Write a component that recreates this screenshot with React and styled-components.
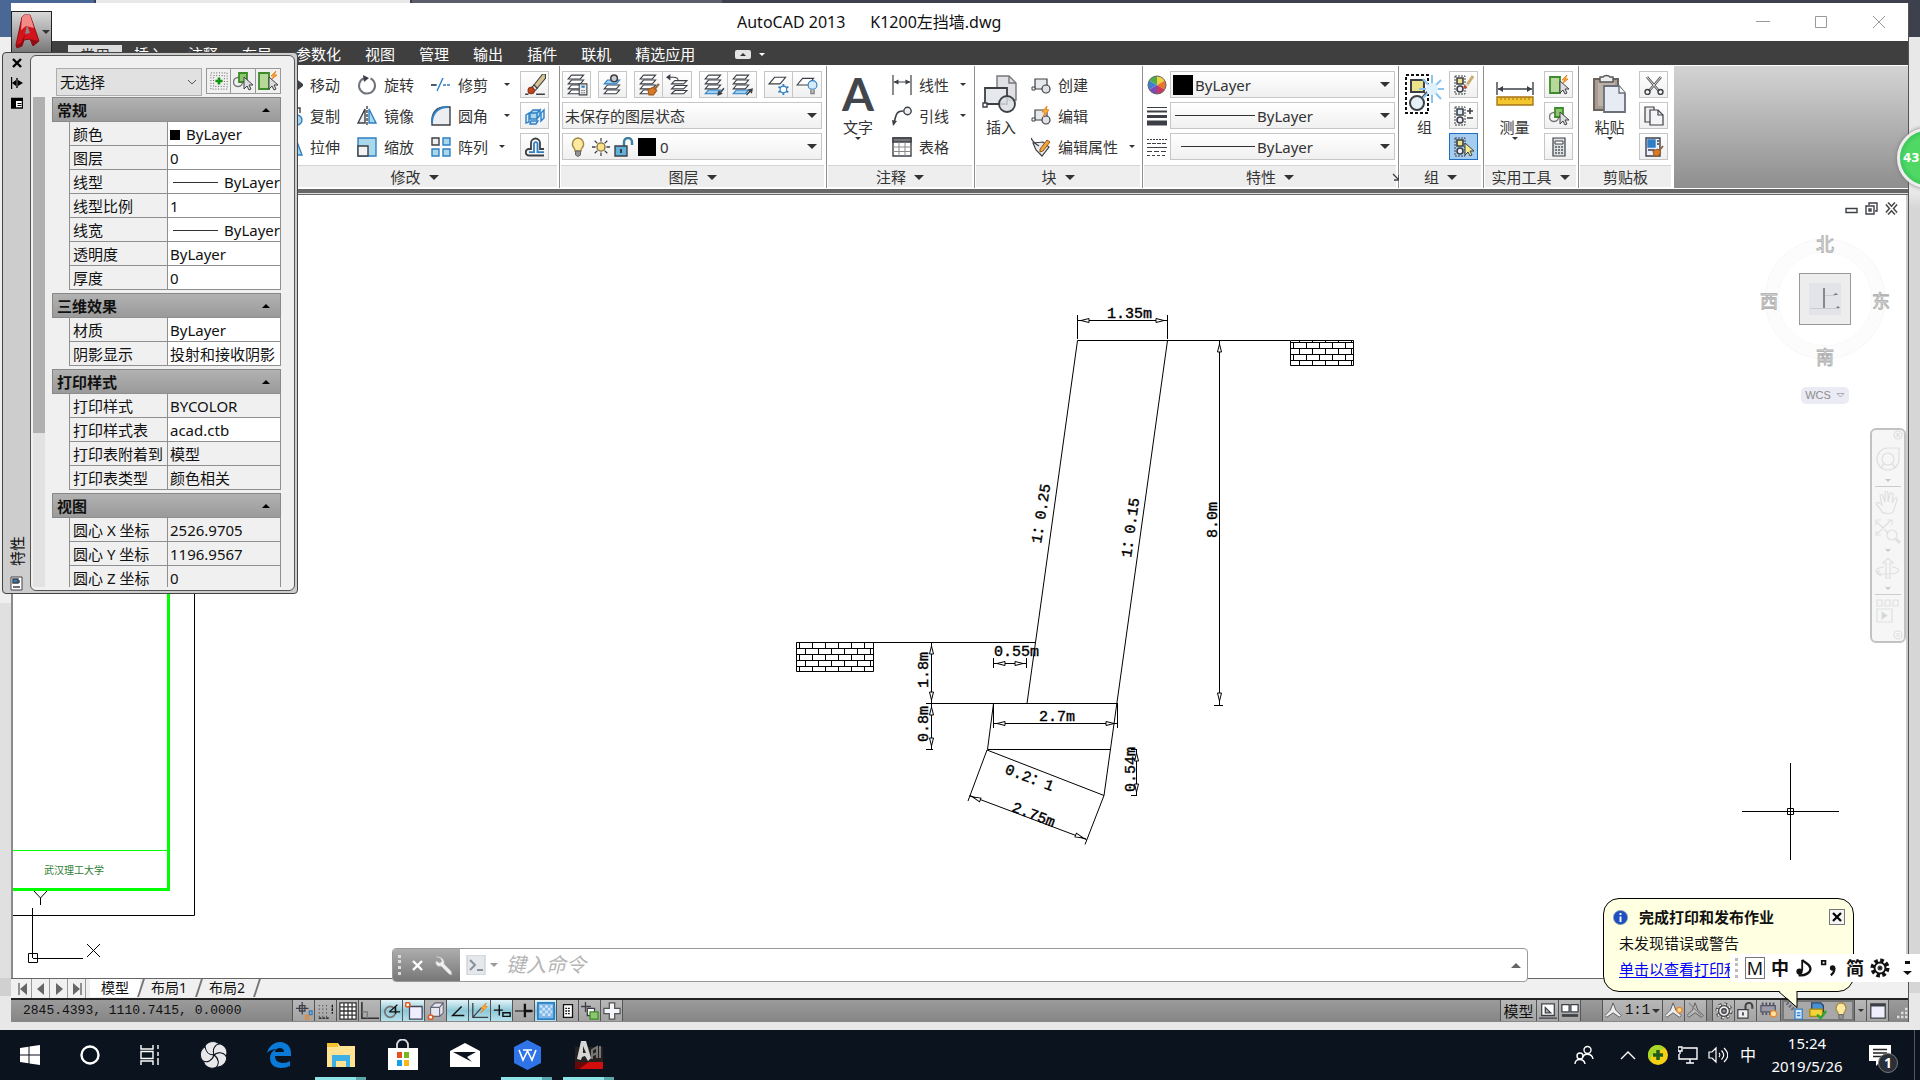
import React from 'react';
import styled, { createGlobalStyle, css } from 'styled-components';

const ink = '#3c4046';
const blue = '#2f7fc4';
const paleBlue = '#a9d8ea';
const orange = '#e8862a';
const uiFont = '"Noto Sans", "Noto Sans CJK SC", sans-serif';
const monoFont = '"Liberation Mono", "Noto Sans CJK SC", monospace';

const GlobalStyle = createGlobalStyle`
  * {
    box-sizing: border-box;
  }
  body {
    margin: 0;
    font-family: ${uiFont};
    font-size: 15px;
    line-height: 20px;
    color: #111;
  }
  button, select, input {
    font: inherit;
    color: inherit;
    margin: 0;
    padding: 0;
    border: 0;
    border-radius: 0;
    background: none;
  }
  svg {
    display: block;
    flex: none;
  }
`;

// Icons

const Svg = ({ s = 20, w = s, h = s, box = '0 0 20 20', line = 1.4, children }) => (
  <svg width={w} height={h} viewBox={box} fill="none" stroke={ink} strokeWidth={line} aria-hidden="true">
    {children}
  </svg>
);

const Caret = ({ s = 8, up, color = '#333' }) => (
  <svg width={s} height={s / 2} viewBox="0 0 8 4" aria-hidden="true">
    <path d={up ? 'M0 4h8L4 0z' : 'M0 0h8L4 4z'} fill={color} />
  </svg>
);

const MoveIcon = () => (
  <Svg><path d="M10 1v18M1 10h18M7 4l3-3 3 3M7 16l3 3 3-3M4 7l-3 3 3 3" /><path d="M15 6l5 4-5 4z" fill={ink} /></Svg>
);
const CopyObjIcon = () => (
  <Svg><circle cx="6" cy="6" r="4" /><circle cx="14" cy="14" r="5" fill={paleBlue} stroke={blue} /><path d="M12 2h5v5" /></Svg>
);
const StretchIcon = () => (
  <Svg><path d="M2 18V8h8M13 2l6 16H8z" fill={paleBlue} stroke={blue} /></Svg>
);
const RotateIcon = () => (
  <Svg><path d="M7 3.200a8 8 0 1 0 6.500 .2" stroke="#70757c" strokeWidth="2" /><path d="M6 0l6 3-5 4z" fill={ink} stroke="none" /></Svg>
);
const MirrorIcon = () => (
  <Svg><path d="M8 3v14H1z" fill="#eee" /><path d="M12 3v14h7z" fill={paleBlue} stroke={blue} /><path d="M10 0v20" strokeDasharray="3 1" /></Svg>
);
const ScaleIcon = () => (
  <Svg><path d="M1 1h18v18H1z" fill={paleBlue} stroke={blue} /><path d="M1 9h10v10H1z" fill="#f2f2f4" /></Svg>
);
const TrimIcon = () => (
  <Svg><path d="M0 10h6M6 16L12 3" stroke={blue} /><path d="M0 10h5" stroke={ink} /><path d="M12 10h8" stroke={blue} strokeDasharray="3 1" /></Svg>
);
const FilletIcon = () => (
  <Svg><path d="M1 19V14C1 6 6 1 14 1h5v18z" fill="#eceef2" /><path d="M1 17C1 7 7 1 17 1" stroke={blue} strokeWidth="2" /></Svg>
);
const ArrayIcon = () => (
  <Svg>
    <path d="M1 1h7v7H1z" fill="#eee" />
    <path d="M12 1h7v7h-7zM1 12h7v7H1zM12 12h7v7h-7z" fill={paleBlue} stroke={blue} />
  </Svg>
);
const EraseIcon = () => (
  <Svg s={22} line={1}>
    <path d="M1 18.500h3M11 18.500h8" strokeWidth="1.400" />
    <path d="M9 10L17 0h2.500v4L12 13z" fill="#d8c292" />
    <path d="M6 13l3-3 3 3-3 3z" fill="#e4e4e4" />
    <ellipse cx="6.500" cy="15" rx="2.800" ry="3" fill="#c0451c" stroke="#8a2f10" />
  </Svg>
);
const ExplodeIcon = () => (
  <Svg>
    <path d="M5 7l3-3h7l-3 3zM5 7h7v6H5zM12 7l3-3v5l-3 4z" fill={paleBlue} stroke={blue} />
    <path d="M1 9l3-2v9l-3 1zM16 7l3-3v8l-3 3zM6 15h7l-2 3H5z" fill="#d8eefa" stroke={blue} />
  </Svg>
);
const OffsetIcon = () => (
  <Svg>
    <path d="M19 18.500H4a3.200 3.200 0 0 1 0-6.500h2V6a4.500 4.500 0 0 1 9 0v6h4" strokeWidth="1.800" />
    <path d="M4 15.200h5V6.500a1.800 1.800 0 0 1 3.500 0v8.700H19" stroke={blue} strokeWidth="1.800" />
  </Svg>
);

const Layers = ({ accent }) => (
  <>
    <path d="M5 14.500h11l-3 3.500H2z" fill={accent === 'low' ? '#9fd0f2' : '#fff'} stroke={accent === 'low' ? blue : ink} />
    <path d="M5 10h11l-3 3.500H2z" fill="#fff" />
    <path d="M5 5.500h11l-3 3.500H2z" fill={accent === 'top' ? '#9fd0f2' : '#fff'} stroke={accent === 'top' ? blue : ink} />
    {accent !== 'top' && <path d="M5 1h11l-3 3.500H2z" fill="#fff" />}
  </>
);
const Brush = () => (
  <>
    <path d="M19 9l-4 5" stroke="#8a6a42" strokeWidth="2" />
    <path d="M9 14l5-2 3 3-3 4h-4z" fill="#d47a26" stroke="#a3561a" strokeWidth="1" />
  </>
);
const LayerPropsIcon = () => (
  <Svg s={22} line={1}><Layers /><path d="M12 9h7v10h-7z" fill="#eee" /><path d="M14 11.500h3" stroke={blue} strokeWidth="2" /><path d="M14 15h3M14 17h3" strokeDasharray="1 1" /></Svg>
);
const LayerCurrentIcon = () => (
  <Svg s={22} line={1}><Layers accent="top" /><circle cx="11" cy="4" r="3" fill="#ccc" strokeWidth="1.400" /></Svg>
);
const LayerMatchIcon = () => <Svg s={22} line={1}><Layers /><Brush /></Svg>;
const LayerPrevIcon = () => (
  <Svg s={22} line={1}><path d="M8 6h11l-3 3H5zM8 10.500h11l-3 3H5zM8 15h11l-3 3H5z" fill="#fff" /><path d="M2 3h5c3 0 4 1 4 3" /><path d="M0 3l4-3v6z" fill={ink} stroke="none" /></Svg>
);
const LayerIsoIcon = () => (
  <Svg s={22} line={1}><Layers accent="low" /><path d="M19 13l-4 5" strokeWidth="1.400" /><path d="M13 20l1-5 4 3z" fill={ink} stroke="none" /></Svg>
);
const LayerUnisoIcon = () => (
  <Svg s={22} line={1}><Layers accent="low" /><path d="M14 19l4-4" strokeWidth="1.400" /><path d="M20 13l-1 5-4-4z" fill={ink} stroke="none" /></Svg>
);
const LayerFreezeIcon = () => (
  <Svg s={22} line={1}>
    <path d="M6 3h10l-5 6H1z" fill="#fff" />
    <path d="M14 9v10M9.500 11.500l9 5M18.500 11.500l-9 5" stroke={blue} strokeWidth="1.600" />
    <circle cx="14" cy="14" r="3" fill="#fff" stroke={blue} />
  </Svg>
);
const LayerOffIcon = () => (
  <Svg s={22} line={1}><path d="M6 4h10l-5 6H1z" fill="#fff" /><circle cx="15" cy="10" r="4" fill="#d5ebfa" stroke={blue} /><path d="M13.500 14v4h3v-4" fill="#bbb" stroke="#777" /></Svg>
);

const BulbIcon = ({ s = 20 }) => (
  <Svg s={s}>
    <path d="M10 1a6 6 0 0 1 4 10c-1 1-1 2-1 3H7c0-1 0-2-1-3A6 6 0 0 1 10 1z" fill="#ffe9a0" stroke="#a58b4a" />
    <path d="M7.500 14h5v4l-2.500 1.500L7.500 18z" fill="#8f9499" stroke="#666" strokeWidth="1" />
  </Svg>
);
const SunIcon = () => (
  <Svg s={18}>
    <circle cx="10" cy="10" r="4.500" fill="#ffe08a" stroke="#7a6a3a" />
    <path d="M10 0v4M10 16v4M0 10h4M16 10h4M3 3l3 3M14 14l3 3M3 17l3-3M14 6l3-3" />
  </Svg>
);
const UnlockIcon = ({ s = 20, fill = '#5fb3d8', metal = '#3f7f9e' }) => (
  <Svg s={s}>
    <path d="M10 9V5a4 4 0 0 1 8 0v3" stroke={metal} strokeWidth="2.400" />
    <path d="M1 9h12v10H1z" fill={fill} />
    <path d="M7 12v4" strokeWidth="2" />
  </Svg>
);

const LinearDimIcon = () => (
  <Svg line={1.2}><path d="M1 0v20M19 0v20M2 7h16" /><path d="M1.500 7l5-2.500v5zM18.500 7l-5-2.500v5z" fill={ink} stroke="none" /></Svg>
);
const LeaderIcon = () => (
  <Svg><path d="M2 18C4 6 6 5 11 5" strokeWidth="1.600" /><circle cx="15.500" cy="5" r="3.700" fill="#eee" /><path d="M1 20l-1-6 5 1z" fill={ink} stroke="none" /></Svg>
);
const TableIcon = () => (
  <Svg>
    <path d="M1 1h18v18H1z" fill="#fff" /><path d="M1 1h18v4H1z" fill="#777" />
    <path d="M1 10h18M1 14.500h18M7 5v14M13 5v14" stroke="#888" strokeWidth="1" />
  </Svg>
);
const InsertIcon = () => (
  <Svg s={38} box="0 0 38 38">
    <path d="M15 1h12l7 7v17H15z" fill="#dfe1e5" stroke="#777" />
    <path d="M27 1v7h7" stroke="#777" />
    <path d="M3 13h22v16H3z" fill="#e6e8ec" strokeWidth="1.800" />
    <circle cx="25" cy="29" r="8" fill="#dadde2" fillOpacity=".85" strokeWidth="1.800" />
    <path d="M1 28h4v4H1z" fill="#fff" />
  </Svg>
);
const BlockBase = () => (
  <>
    <path d="M4 4h12v10H4z" fill="#e6e8ec" />
    <circle cx="15" cy="14" r="4" fill="#e0e2e6" />
    <path d="M1 12h3v3H1z" fill="#fff" strokeWidth="1" />
  </>
);
const CreateBlockIcon = () => <Svg line={1.2}><BlockBase /></Svg>;
const EditBlockIcon = () => (
  <Svg line={1.2}><BlockBase /><path d="M16 0l-5 6h3l-2 5 6-7h-3z" fill="#ffb52e" stroke={orange} strokeWidth="1" /></Svg>
);
const EditAttrIcon = () => (
  <Svg line={1.2}>
    <path d="M2 6l10-1 6 5-7 9-6-6z" fill="#e8eaee" /><path d="M0 1c2 5 5 6 8 8" />
    <path d="M9 12l7-9 3 2-7 9-3 1z" fill="#f3a43c" stroke="#8c5a1a" strokeWidth="1" />
  </Svg>
);
const WheelIcon = () => (
  <Svg>
    <g stroke="none">
      <path d="M10 10V1a9 9 0 0 1 7.800 4.500z" fill="#f2d23c" />
      <path d="M10 10l7.800-4.500a9 9 0 0 1 0 9z" fill="#e8762c" />
      <path d="M10 10l7.800 4.500A9 9 0 0 1 10 19z" fill="#c83a58" />
      <path d="M10 10v9a9 9 0 0 1-7.800-4.500z" fill="#7a4bb8" />
      <path d="M10 10l-7.800 4.500a9 9 0 0 1 0-9z" fill="#3f7fd0" />
      <path d="M10 10L2.200 5.500A9 9 0 0 1 10 1z" fill="#4fae4a" />
    </g>
    <circle cx="10" cy="10" r="9" stroke="#666" strokeWidth="1" />
  </Svg>
);
const WeightIcon = () => (
  <Svg><path d="M0 1.500h20" strokeWidth="1" /><path d="M0 5.500h20" strokeWidth="2" /><path d="M0 10.500h20" strokeWidth="3" /><path d="M0 17h20" strokeWidth="5" /></Svg>
);
const LinetypeIcon = () => (
  <Svg line={1}>
    <path d="M0 2.500h20" strokeDasharray="2 1" /><path d="M0 6.500h20" strokeDasharray="4 1" /><path d="M0 10.500h20" />
    <path d="M0 14.500h20" strokeDasharray="5 2" /><path d="M0 18.500h20" strokeDasharray="3 2" />
  </Svg>
);
const GroupIcon = () => (
  <Svg s={40} box="0 0 40 40">
    <path d="M1 1h22v38H1z" stroke="#111" strokeWidth="2" strokeDasharray="3 2" />
    <path d="M6 6h13v12H6z" fill="#ece28a" strokeWidth="2" />
    <path d="M17 24l6-7" strokeWidth="2" /><circle cx="12" cy="29" r="7" fill="#e6f1f5" strokeWidth="2" />
    <path d="M27 1v28M14 15h25M18 5l18 20M36 6L18 24" stroke="#8cc4f0" strokeWidth="2" />
    <circle cx="27" cy="15" r="6" fill="#dff1ff" stroke="none" />
  </Svg>
);
const GroupMini = ({ tone = '#ece28a' }) => (
  <>
    <path d="M1 1h10v18H1z" strokeDasharray="2 1" strokeWidth="1" />
    <path d="M3 3h6v6H3z" fill={tone} strokeWidth="1.600" /><circle cx="6" cy="14" r="3" fill="#eef" strokeWidth="1.600" />
  </>
);
const Pointer = ({ fill = '#ddd' }) => <path d="M11 6v12l3-3 2 4 2-1-2-4h4z" fill={fill} strokeWidth="1" />;
const UngroupIcon = () => (
  <Svg><GroupMini /><path d="M19 1l-6 9" stroke="#c9ad6c" strokeWidth="3" /><path d="M13 9l-1 2" stroke="#ddd" strokeWidth="3" /><path d="M12 11l-1.500 2" stroke="#c0451c" strokeWidth="3.500" /></Svg>
);
const GroupEditIcon = () => (
  <Svg><GroupMini tone="#dbe9f7" /><path d="M13 5h6M16 2v6M13 12h6" strokeWidth="1.600" /></Svg>
);
const GroupSelectIcon = () => <Svg><GroupMini /><Pointer fill="#f4e98c" /></Svg>;
const MeasureIcon = () => (
  <Svg w={38} h={24} box="0 0 38 24">
    <path d="M1 0v13M37 0v13M2 7h34" strokeWidth="1.400" /><path d="M2 7l5-3v6zM36 7l-5-3v6z" fill={ink} stroke="none" />
    <path d="M1 15h36v8H1z" fill="#f3c52f" stroke="#a8761a" />
    <path d="M5 15v3M9 15v3M13 15v3M17 15v3M21 15v3M25 15v3M29 15v3M33 15v3" stroke="#a8761a" strokeWidth="1" />
  </Svg>
);
const QuickSelectIcon = () => (
  <Svg><path d="M1 2h10v16H1z" fill="#b6d99a" stroke="#3f8a2c" strokeWidth="1.800" /><path d="M18 0l-5 5h3l-3 4 6-5h-3z" fill="#ffb52e" stroke={orange} strokeWidth="1" /><Pointer /></Svg>
);
const SelectObjIcon = () => (
  <Svg><circle cx="5" cy="11" r="4.500" stroke="#777" /><path d="M6 2h8v9H6z" fill="#8cc76d" stroke="#3f8a2c" strokeWidth="1.800" /><Pointer /></Svg>
);
const CalcIcon = () => (
  <Svg line={1.2}>
    <path d="M4 1h12v18H4z" fill="#dde0e4" /><path d="M6 4h8v3H6z" fill="#fff" strokeWidth="1" />
    <path d="M6 10h8M6 13h8M6 16h8" stroke="#777" strokeDasharray="2 1" strokeWidth="2" />
  </Svg>
);
const PasteIcon = () => (
  <Svg w={34} h={40} box="0 0 34 40">
    <path d="M1 5h24v31H1z" fill="#a89c92" stroke="#6b625b" strokeWidth="2" />
    <path d="M5 8h17v24H5z" fill="#bcb2a9" stroke="none" />
    <path d="M7 3h3a4 3 0 0 1 7 0h3v5H7z" fill="#eee" stroke="#555" />
    <path d="M11 12h15l6 7v19H11z" fill="#e6ebf4" stroke="#6a7078" strokeWidth="1.800" /><path d="M26 12v7h6" fill="#fff" stroke="#6a7078" />
  </Svg>
);
const CutIcon = () => (
  <Svg><path d="M3 2l12 14M17 2L5 16" stroke="#555" strokeWidth="2.600" /><path d="M3 2l12 14M17 2L5 16" stroke="#ddd" strokeWidth="1" /><circle cx="3.500" cy="17" r="2.500" /><circle cx="16.500" cy="17" r="2.500" /></Svg>
);
const CopyIcon = () => (
  <Svg line={1.2}><path d="M1 1h9v15H1z" fill="#eee" /><path d="M6 4h8l5 5v10H6z" fill="#f4f4f6" /><path d="M14 4v5h5" /></Svg>
);
const MatchIcon = () => (
  <Svg><path d="M2 1h14v18H2z" fill="#eef" /><path d="M4 3h7v7H4z" fill={blue} stroke={blue} /><path d="M13 4h2M13 7h2M4 13h7" /><Brush /></Svg>
);

// Layout

const Desktop = styled.div`
  position: relative;
  display: flex;
  flex-direction: column;
  min-height: 100vh;
  overflow: hidden;
  background: #e8e8e8;
`;

const BackTop = styled.div`
  display: flex;
  height: 3px;
  background: #3d414d;
  & > i:nth-child(1) { width: 94px; background: #4a6896; }
  & > i:nth-child(2) { width: 314px; margin-left: 2px; background: #e8e8e8; }
  & > i:nth-child(3) { width: 310px; margin-left: 2px; background: #5a5e69; }
`;

const Middle = styled.div`
  flex: 1;
  display: flex;
`;

const Edge = styled.div`
  width: 11px;
  background: ${props => (props.$right
    ? 'linear-gradient(#3d414d 34px, #e8e8e8 34px 190px, #d6d6d6 205px 990px, #e8e8e8 990px)'
    : 'linear-gradient(#4a6896 34px, #efefef 34px 600px, #e0e0e0 600px 975px, #d0d0d0 975px 993px, #e8e8e8 993px)')};
`;

const Window = styled.main`
  flex: 1;
  min-width: 0;
  display: flex;
  flex-direction: column;
  border-right: 1px solid #555;
`;

const TitleBar = styled.header`
  display: flex;
  align-items: center;
  height: 38px;
  padding: 0 22px 0 726px;
  background: #fff;
  white-space: pre;
  h1 {
    flex: 1;
    margin: 0;
    font-size: 16px;
    font-weight: 400;
  }
`;

const CaptionButton = styled.button`
  width: 14px;
  height: 14px;
  margin-left: 44px;
`;

const MenuBar = styled.nav`
  display: flex;
  align-items: center;
  gap: 24px;
  height: 25px;
  padding: 2px 0 0 69px;
  background: #3f3f3f;
  border-bottom: 1px solid #fff;
  color: #fff;
`;

const MenuTab = styled.button`
  height: 22px;
  white-space: nowrap;
  ${props => props.$active && css`
    height: 20px;
    margin: 2px -12px 0;
    padding: 0 12px;
    background: #dcdcdc;
    color: #333;
  `}
`;

const MinimizeTab = styled.button`
  display: flex;
  align-items: center;
  gap: 8px;
  margin-left: 16px;
  span {
    display: flex;
    align-items: center;
    justify-content: center;
    width: 16px;
    height: 9px;
    border-radius: 2px;
    background: #e4e4e4;
  }
`;

const Ribbon = styled.section`
  display: flex;
  height: 122px;
  background: linear-gradient(#d4d4d4, #8e8e8e);
  color: #333;
`;

const Panel = styled.div`
  display: flex;
  flex-direction: column;
  width: ${props => props.$w}px;
  border-right: 1px solid #8f8f8f;
  background: #fff;
  &:last-child { border-right-color: #fff; }
`;

const PanelBody = styled.div`
  flex: 1;
  display: flex;
  gap: ${props => props.$gap || 0}px;
  padding: 5px ${props => props.$pr || 5}px 0 ${props => props.$pl || 2}px;
`;

const PanelFoot = styled.button`
  display: flex;
  align-items: center;
  justify-content: center;
  gap: 8px;
  height: 22px;
  margin: 0 2px 1px 1px;
  padding-top: 1px;
  background: #eee;
  border-top: 1px solid #d4d4d4;
`;

const FootLauncher = styled.span`
  width: 0;
  margin-left: -8px;
  svg { margin-left: 98px; }
`;

const Column = styled.div`
  display: flex;
  flex-direction: column;
  gap: 4px;
  ${props => props.$grow && 'flex: 1; min-width: 0;'}
`;

const ColumnPair = styled.div`
  display: flex;
  gap: 10px;
`;

const Tool = styled.button`
  display: flex;
  align-items: center;
  gap: 7px;
  height: 27px;
  white-space: nowrap;
  & > svg:last-child:not(:first-child) { margin-left: ${props => (props.$wide ? 9 : 4)}px; }
`;

const IconButton = styled.button`
  display: flex;
  align-items: center;
  justify-content: center;
  width: 29px;
  height: 27px;
  border: 1px solid #c6c6c6;
  background: linear-gradient(#fff, #f0f0f0);
  ${props => props.$on && css`
    border-color: #1f6fc0;
    background: #a6cdf0;
  `}
`;

const ButtonRow = styled.div`
  display: flex;
  justify-content: space-between;
`;

const ButtonPair = styled.div`
  display: flex;
  button + button { border-left: 0; }
`;

const BigTool = styled.button`
  display: flex;
  flex-direction: column;
  align-items: center;
  width: 42px;
  height: 80px;
  line-height: 20px;
`;

const BigArt = styled.span`
  display: flex;
  align-items: center;
  justify-content: center;
  height: 46px;
`;

const BigLetter = styled.span`
  font: 700 46px/40px Lato, sans-serif;
  color: #42464c;
`;

const Combo = styled.label`
  display: flex;
  align-items: center;
  gap: 4px;
  height: 27px;
  padding: 0 4px 0 ${props => (props.$pl === undefined ? 2 : props.$pl)}px;
  border: 1px solid #c6c6c6;
  background: linear-gradient(#fff, #f0f0f0);
  select {
    flex: 1;
    min-width: 0;
    appearance: none;
    outline: 0;
  }
`;

const Swatch = styled.i`
  width: ${props => props.$s}px;
  height: ${props => props.$s}px;
  background: #000;
`;

const LineSample = styled.i`
  width: ${props => props.$w}px;
  height: 0;
  border-top: 1px solid #333;
`;

const PropRow = styled.div`
  display: flex;
  align-items: center;
  gap: 3px;
  ${Combo} {
    flex: 1;
    min-width: 0;
    gap: 2px;
  }
`;

const Divider = styled.div`
  height: 7px;
  background: linear-gradient(#fff 1px, #666 1px 5px, #ddd 5px 6px, #666 6px);
`;

const Canvas = styled.section`
  position: relative;
  flex: 1;
  background: #fff;
  border-left: 2px solid #8a8a8a;
  border-right: 2px solid #ccc;
`;

const Drawing = styled.svg`
  position: absolute;
  inset: 0;
  width: 100%;
  height: 100%;
  text {
    font: 15px ${monoFont};
    fill: #000;
    stroke: #000;
    stroke-width: .4;
  }
`;

const DocButtons = styled.div`
  position: absolute;
  top: 7px;
  right: 8px;
  display: flex;
  gap: 7px;
`;

const ViewCube = styled.svg`
  position: absolute;
  top: 34px;
  right: 11px;
  text {
    font: 400 18px "Noto Sans CJK SC", sans-serif;
    fill: #f2f2f2;
    stroke: #aaa;
    stroke-width: .8;
    text-anchor: middle;
  }
`;

const WcsButton = styled.button`
  position: absolute;
  top: 192px;
  right: 57px;
  display: flex;
  align-items: center;
  justify-content: center;
  gap: 5px;
  width: 48px;
  height: 17px;
  border-radius: 5px;
  background: #ebebf5;
  color: #8c8c8c;
  font: 11px/17px "Liberation Sans", sans-serif;
`;

const NavBar = styled.aside`
  position: absolute;
  top: 233px;
  right: 0;
  width: 36px;
  height: 215px;
  border: 2px solid #c2c2c2;
  border-radius: 6px;
  background: #f6f6f6;
`;

const CommandLine = styled.div`
  position: absolute;
  z-index: 1;
  left: 379px;
  right: 378px;
  bottom: -4px;
  display: flex;
  height: 34px;
  border: 1px solid #999;
  border-radius: 4px;
  background: #fff;
  overflow: hidden;
  input {
    flex: 1;
    min-width: 0;
    padding: 0 0 2px 2px;
    outline: 0;
    font-size: 20px;
    font-style: italic;
    &::placeholder { color: #b4b4b4; opacity: 1; }
  }
`;

const CommandGrip = styled.div`
  display: flex;
  align-items: center;
  gap: 11px;
  width: 67px;
  padding-left: 5px;
  background: linear-gradient(#adadad, #777);
`;

const CommandButton = styled.button`
  display: flex;
  align-items: center;
  gap: 4px;
  padding: 0 6px;
`;

const LayoutTabs = styled.div`
  display: flex;
  height: 20px;
  padding-left: 3px;
  border-top: 1px solid #666;
  background: #f0f0f0;
  font-size: 14px;
`;

const TabArrow = styled.button`
  display: flex;
  align-items: center;
  justify-content: center;
  width: 18px;
  border-right: 1px solid #999;
`;

const LayoutTab = styled.button`
  position: relative;
  height: 18px;
  padding: 0 11px;
  line-height: 18px;
  &::after {
    content: '';
    position: absolute;
    top: 0;
    right: -2px;
    width: 2px;
    height: 18px;
    background: #777;
    transform: skewX(-18deg);
  }
  ${props => props.$active && css`
    margin-left: 4px;
    background: #fff;
  `}
`;

const StatusBar = styled.footer`
  display: flex;
  height: 24px;
  padding-left: 12px;
  border-top: 2px solid #222;
  border-bottom: 1px solid #888;
  background: linear-gradient(#9b9b9b, #868686);
`;

const Coords = styled.output`
  width: 269px;
  font: 13px/22px ${monoFont};
`;

const StatusButton = styled.button`
  display: flex;
  align-items: center;
  justify-content: center;
  gap: 2px;
  width: ${props => props.$w || 22}px;
  border-left: 1px solid #555;
  background: ${props => (props.$on ? 'linear-gradient(#e2f4f8, #8fc8d8 50%, #b5e2ec)' : 'linear-gradient(#b8b8b8, #a3a3a3)')};
  font: ${props => (props.$mono ? `14px/21px ${monoFont}` : 'inherit')};
  white-space: nowrap;
`;

const StatusGap = styled.div`
  width: ${props => props.$w}px;
  border-left: 1px solid #555;
  ${props => props.$grow && 'flex: 1;'}
`;

const TrayGroup = styled.div`
  display: flex;
  align-items: center;
  justify-content: space-around;
  width: 72px;
  border: 2px solid #777;
  background: #a8a8a8;
`;

const BackBottom = styled.div`
  height: 8px;
  background: #e8e8e8;
`;

// Properties palette

const Palette = styled.aside`
  position: absolute;
  z-index: 2;
  top: 52px;
  left: 2px;
  display: flex;
  width: 296px;
  height: 542px;
  padding: 2px 2px 2px 0;
  border: 1px solid #444;
  border-radius: 4px;
  background: #cdcdcd;
`;

const PaletteRail = styled.div`
  display: flex;
  flex-direction: column;
  align-items: center;
  gap: 8px;
  width: 27px;
  padding-top: 2px;
  button {
    display: flex;
    width: 12px;
    height: 12px;
  }
`;

const RailTitle = styled.h2`
  margin: auto 0 0;
  padding-top: 2px;
  font-size: 15px;
  font-weight: 400;
  line-height: 20px;
  writing-mode: vertical-rl;
  transform: rotate(180deg);
  text-orientation: sideways;
`;

const PaletteBody = styled.div`
  flex: 1;
  min-width: 0;
  padding: 12px 13px 2px 2px;
  border: 1px solid #555;
  border-radius: 6px;
  background: #f0f0f0;
`;

const PaletteTop = styled.div`
  display: flex;
  gap: 4px;
  height: 28px;
  padding-left: 23px;
  ${Combo} {
    width: 148px;
    background: #e1e1e1;
    border-color: #adadad;
    height: 28px;
    padding-left: 3px;
  }
  ${IconButton} {
    width: 25px;
    height: 26px;
    border-color: #999;
    background: #f0f0f0;
  }
`;

const PaletteScroll = styled.div`
  display: flex;
  gap: 7px;
  height: 490px;
  margin-top: 1px;
  overflow: hidden;
`;

const Track = styled.div`
  width: 12px;
  background: linear-gradient(#b0b0b0 336px, #e2e2e2 336px);
`;

const Groups = styled.div`
  flex: 1;
  min-width: 0;
`;

const GroupHead = styled.button`
  display: flex;
  align-items: center;
  justify-content: space-between;
  width: 100%;
  height: 25px;
  padding: 0 10px 0 4px;
  border: 1px solid #888;
  background: linear-gradient(#b2b2b2, #9a9a9a);
  font-weight: 700;
`;

const PropTable = styled.table`
  width: 212px;
  margin: -1px 0 3px 17px;
  border-collapse: collapse;
  table-layout: fixed;
  th, td {
    height: 24px;
    padding: 0 0 0 3px;
    border: 1px solid #8f8f8f;
    overflow: hidden;
    font-weight: 400;
    line-height: 20px;
    text-align: left;
    white-space: nowrap;
  }
  th {
    width: 98px;
    background: #f0f0f0;
  }
  td { padding-left: 2px; }
`;

const PropValue = styled.td`
  background: ${props => (props.$locked ? '#f0f0f0' : '#fff')};
  ${Swatch}, ${LineSample} {
    display: inline-block;
    margin-right: 6px;
    vertical-align: 0;
  }
  ${LineSample} {
    margin-left: 3px;
    vertical-align: 5px;
  }
`;

const AppButton = styled.button`
  position: absolute;
  top: 11px;
  left: 11px;
  display: flex;
  align-items: center;
  gap: 2px;
  width: 41px;
  height: 42px;
  padding-left: 3px;
  border: 1px solid #222;
  background: linear-gradient(#d8d8d8, #aaa 50%, #777);
`;

// Balloon, IME bar and floating badge

const Balloon = styled.div`
  position: absolute;
  z-index: 3;
  right: 66px;
  bottom: 88px;
  width: 251px;
  height: 94px;
  padding: 8px 8px 0 15px;
  border: 1px solid #000;
  border-radius: 16px;
  background: #ffffe1;
  line-height: 20px;
  p { margin: 6px 0; }
  a {
    color: #00f;
    white-space: nowrap;
    text-underline-offset: 2px;
  }
`;

const BalloonHead = styled.div`
  display: flex;
  align-items: center;
  justify-content: space-between;
  gap: 11px;
  height: 20px;
  margin-left: -6px;
  strong { flex: 1; }
  button {
    width: 16px;
    height: 16px;
    border: 1px solid #777;
    background: #f4f4f4;
  }
`;

const BalloonTail = styled.svg`
  position: absolute;
  top: 91px;
  right: 55px;
`;

const ImeBar = styled.div`
  position: absolute;
  z-index: 4;
  right: 0;
  bottom: 98px;
  display: flex;
  align-items: center;
  gap: 5px;
  width: 190px;
  height: 28px;
  padding-left: 5px;
  background: #fff;
  color: #111;
  font-size: 18px;
  font-weight: 700;
  button {
    flex: none;
    width: 20px;
    height: 22px;
    line-height: 20px;
  }
  button:first-of-type {
    margin-left: 2px;
    border: 1px solid #777;
    font-weight: 400;
  }
`;

const Grip = styled.i`
  width: 3px;
  height: 20px;
  border-left: 3px dotted ${props => props.$color || '#bbb'};
`;

const SpeedBall = styled.button`
  position: absolute;
  top: 128px;
  right: -37px;
  width: 60px;
  height: 60px;
  padding-left: 3px;
  border: 3px solid #eee;
  border-radius: 50%;
  background: radial-gradient(#4fd964 55%, #1fa347);
  box-shadow: 0 0 4px #777;
  color: #fff;
  font: 700 12px/54px "DejaVu Sans", sans-serif;
  text-align: left;
`;

// Taskbar

const Taskbar = styled.footer`
  display: flex;
  align-items: stretch;
  height: 50px;
  background: #0b131e;
  color: #fff;
`;

const TaskButton = styled.button`
  display: flex;
  align-items: center;
  justify-content: center;
  width: ${props => props.$w || 62}px;
  ${props => props.$running && css`
    background: linear-gradient(90deg, #8be3e8 41px, #5aa8ae 41px) 5px 47px / 51px 3px no-repeat;
  `}
`;

const Tray = styled.div`
  display: flex;
  align-items: center;
  margin-left: auto;
`;

const TrayButton = styled.button`
  display: flex;
  align-items: center;
  justify-content: center;
  width: ${props => props.$w || 30}px;
  height: 50px;
  font-size: 16px;
`;

const Clock = styled.button`
  width: 88px;
  height: 50px;
  line-height: 23px;
  white-space: pre-line;
`;

const Notice = styled.button`
  position: relative;
  width: 64px;
  height: 50px;
  padding-left: 18px;
  border-right: 1px solid #556;
  margin-right: 5px;
  span {
    position: absolute;
    top: 23px;
    left: 27px;
    width: 20px;
    height: 20px;
    border: 1px solid #777;
    border-radius: 50%;
    background: #2a2f38;
    font-size: 14px;
    font-weight: 700;
    line-height: 18px;
  }
`;

const menuTabs = ['常用', '插入', '注释', '布局', '参数化', '视图', '管理', '输出', '插件', '联机', '精选应用'];

const groups = [
  ['常规', [
    ['颜色', 'ByLayer', 'swatch'],
    ['图层', '0'],
    ['线型', 'ByLayer', 'line'],
    ['线型比例', '1'],
    ['线宽', 'ByLayer', 'line'],
    ['透明度', 'ByLayer'],
    ['厚度', '0'],
  ]],
  ['三维效果', [
    ['材质', 'ByLayer'],
    ['阴影显示', '投射和接收阴影'],
  ]],
  ['打印样式', [
    ['打印样式', 'BYCOLOR', 'locked'],
    ['打印样式表', 'acad.ctb'],
    ['打印表附着到', '模型', 'locked'],
    ['打印表类型', '颜色相关', 'locked'],
  ]],
  ['视图', [
    ['圆心 X 坐标', '2526.9705', 'locked'],
    ['圆心 Y 坐标', '1196.9567', 'locked'],
    ['圆心 Z 坐标', '0', 'locked'],
  ]],
];

const PropertiesPalette = () => (
  <Palette>
    <PaletteRail>
      <button aria-label="关闭">
        <Svg s={12} box="0 0 12 12"><path d="M2 2l8 8M10 2l-8 8" stroke="#000" strokeWidth="2.400" /></Svg>
      </button>
      <button aria-label="自动隐藏">
        <Svg s={12} box="0 0 12 12"><path d="M.500 0v12M6 1v10" stroke="#000" /><path d="M5 3v6L1 6zM7 3v6l5-3z" fill="#000" stroke="none" /></Svg>
      </button>
      <button aria-label="菜单">
        <Svg s={12} box="0 0 12 12"><path d="M.500 1.500h11v9.500H.500z" fill="#fff" stroke="#000" /><path d="M0 1h12v3H0zM0 4h5v7H0z" fill="#000" stroke="none" /><path d="M6.500 6.500h4M6.500 8.500h4M1.500 5.500h2" stroke="#000" strokeWidth="1" /></Svg>
      </button>
      <RailTitle>特性</RailTitle>
      <Svg w={13} h={15} box="0 0 13 15"><path d="M1 1h11v13H1z" fill="#fff" strokeWidth="1" /><path d="M3 3h5v4H3z" fill={blue} /><path d="M3 11h7M9 4v3" /></Svg>
    </PaletteRail>
    <PaletteBody>
      <PaletteTop>
        <Combo>
          <select aria-label="选择"><option>无选择</option></select>
          <Svg w={10} h={6} box="0 0 10 6"><path d="M1 1l4 4 4-4" stroke="#555" strokeWidth="1" /></Svg>
        </Combo>
        <ButtonPair>
          <IconButton aria-label="切换">
            <Svg s={18} line={1}><path d="M1 1h18v18H1zM4 4h12v12H4z" strokeDasharray="1 2" /><path d="M10 6v8M6 10h8" stroke="#119611" strokeWidth="3" /></Svg>
          </IconButton>
          <IconButton aria-label="选择对象"><SelectObjIcon /></IconButton>
          <IconButton aria-label="快速选择"><QuickSelectIcon /></IconButton>
        </ButtonPair>
      </PaletteTop>
      <PaletteScroll>
        <Track />
        <Groups>
          {groups.map(([title, rows]) => (
            <React.Fragment key={title}>
              <GroupHead>{title}<Caret up color="#000" /></GroupHead>
              <PropTable>
                <tbody>
                  {rows.map(([name, value, kind]) => (
                    <tr key={name}>
                      <th scope="row">{name}</th>
                      <PropValue $locked={kind === 'locked'}>
                        {kind === 'swatch' && <Swatch $s={10} />}
                        {kind === 'line' && <LineSample $w={45} />}
                        {value}
                      </PropValue>
                    </tr>
                  ))}
                </tbody>
              </PropTable>
            </React.Fragment>
          ))}
        </Groups>
      </PaletteScroll>
    </PaletteBody>
  </Palette>
);

const Foot = ({ children, launcher }) => (
  <PanelFoot>
    {children}
    {children && children !== '剪贴板' && <Caret s={10} />}
    {launcher && (
      <FootLauncher><Svg s={8} box="0 0 8 8"><path d="M1 1l5 5M7 2v5H2" /></Svg></FootLauncher>
    )}
  </PanelFoot>
);

const RibbonPanels = () => (
  <Ribbon>
    <Panel $w={260}><PanelBody /><Foot /></Panel>
    <Panel $w={289}>
      <PanelBody $gap={17} $pl={12} $pr={10}>
        <Column>
          <Tool><MoveIcon />移动</Tool>
          <Tool><CopyObjIcon />复制</Tool>
          <Tool><StretchIcon />拉伸</Tool>
        </Column>
        <Column>
          <Tool><RotateIcon />旋转</Tool>
          <Tool><MirrorIcon />镜像</Tool>
          <Tool><ScaleIcon />缩放</Tool>
        </Column>
        <ColumnPair>
          <Column>
            <Tool $wide><TrimIcon />修剪<Caret s={6} /></Tool>
            <Tool $wide><FilletIcon />圆角<Caret s={6} /></Tool>
            <Tool><ArrayIcon />阵列<Caret s={6} /></Tool>
          </Column>
          <Column>
            <IconButton aria-label="删除"><EraseIcon /></IconButton>
            <IconButton aria-label="分解"><ExplodeIcon /></IconButton>
            <IconButton aria-label="偏移"><OffsetIcon /></IconButton>
          </Column>
        </ColumnPair>
      </PanelBody>
      <Foot>修改</Foot>
    </Panel>
    <Panel $w={267}>
      <PanelBody $pr={4}>
        <Column $grow>
          <ButtonRow>
            <IconButton aria-label="图层特性"><LayerPropsIcon /></IconButton>
            <IconButton aria-label="置为当前"><LayerCurrentIcon /></IconButton>
            <ButtonPair>
              <IconButton aria-label="匹配"><LayerMatchIcon /></IconButton>
              <IconButton aria-label="上一个"><LayerPrevIcon /></IconButton>
            </ButtonPair>
            <ButtonPair>
              <IconButton aria-label="隔离"><LayerIsoIcon /></IconButton>
              <IconButton aria-label="取消隔离"><LayerUnisoIcon /></IconButton>
            </ButtonPair>
            <ButtonPair>
              <IconButton aria-label="冻结"><LayerFreezeIcon /></IconButton>
              <IconButton aria-label="关闭图层"><LayerOffIcon /></IconButton>
            </ButtonPair>
          </ButtonRow>
          <Combo>
            <select aria-label="图层状态"><option>未保存的图层状态</option></select>
            <Caret s={10} />
          </Combo>
          <Combo $pl={5}>
            <BulbIcon /><SunIcon /><UnlockIcon />
            <Swatch $s={18} />
            <select aria-label="图层"><option>0</option></select>
            <Caret s={10} />
          </Combo>
        </Column>
      </PanelBody>
      <Foot>图层</Foot>
    </Panel>
    <Panel $w={148}>
      <PanelBody $gap={13} $pl={10}>
        <BigTool><BigArt><BigLetter>A</BigLetter></BigArt>文字<Caret s={6} /></BigTool>
        <Column>
          <Tool><LinearDimIcon />线性<Caret s={6} /></Tool>
          <Tool><LeaderIcon />引线<Caret s={6} /></Tool>
          <Tool><TableIcon />表格</Tool>
        </Column>
      </PanelBody>
      <Foot>注释</Foot>
    </Panel>
    <Panel $w={168}>
      <PanelBody $gap={9} $pl={5}>
        <BigTool><BigArt><InsertIcon /></BigArt>插入</BigTool>
        <Column>
          <Tool><CreateBlockIcon />创建</Tool>
          <Tool><EditBlockIcon />编辑</Tool>
          <Tool><EditAttrIcon />编辑属性<Caret s={6} /></Tool>
        </Column>
      </PanelBody>
      <Foot>块</Foot>
    </Panel>
    <Panel $w={256}>
      <PanelBody $pl={4} $pr={3}>
        <Column $grow>
          <PropRow>
            <WheelIcon />
            <Combo><Swatch $s={20} /><select aria-label="颜色"><option>ByLayer</option></select><Caret s={10} /></Combo>
          </PropRow>
          <PropRow>
            <WeightIcon />
            <Combo $pl={4}><LineSample $w={80} /><select aria-label="线宽"><option>ByLayer</option></select><Caret s={10} /></Combo>
          </PropRow>
          <PropRow>
            <LinetypeIcon />
            <Combo $pl={10}><LineSample $w={74} /><select aria-label="线型"><option>ByLayer</option></select><Caret s={10} /></Combo>
          </PropRow>
        </Column>
      </PanelBody>
      <Foot launcher>特性</Foot>
    </Panel>
    <Panel $w={85}>
      <PanelBody $gap={4} $pl={5}>
        <BigTool><BigArt><GroupIcon /></BigArt>组</BigTool>
        <Column>
          <IconButton aria-label="解除编组"><UngroupIcon /></IconButton>
          <IconButton aria-label="组编辑"><GroupEditIcon /></IconButton>
          <IconButton aria-label="组选择" $on><GroupSelectIcon /></IconButton>
        </Column>
      </PanelBody>
      <Foot>组</Foot>
    </Panel>
    <Panel $w={95}>
      <PanelBody $gap={9} $pl={10}>
        <BigTool><BigArt><MeasureIcon /></BigArt>测量<Caret s={6} /></BigTool>
        <Column>
          <IconButton aria-label="快速选择"><QuickSelectIcon /></IconButton>
          <IconButton aria-label="全部选择"><SelectObjIcon /></IconButton>
          <IconButton aria-label="计算器"><CalcIcon /></IconButton>
        </Column>
      </PanelBody>
      <Foot>实用工具</Foot>
    </Panel>
    <Panel $w={95}>
      <PanelBody $gap={9} $pl={10}>
        <BigTool><BigArt><PasteIcon /></BigArt>粘贴<Caret s={6} /></BigTool>
        <Column>
          <IconButton aria-label="剪切"><CutIcon /></IconButton>
          <IconButton aria-label="复制"><CopyIcon /></IconButton>
          <IconButton aria-label="特性匹配"><MatchIcon /></IconButton>
        </Column>
      </PanelBody>
      <Foot>剪贴板</Foot>
    </Panel>
  </Ribbon>
);

// Arrow head with its tip at x, y; r is the direction of the shaft
const Arrow = ({ x, y, r }) => (
  <path d="M0 0L3 0L11 -2V2L3 0" fill="#fff" transform={`translate(${x} ${y}) rotate(${r})`} />
);

const Label = ({ x, y, r = 0, children }) => (
  <text transform={`translate(${x} ${y}) rotate(${r})`}>{children}</text>
);

const WallDrawing = () => (
  <Drawing viewBox="13 195 1893 783" preserveAspectRatio="xMinYMin meet" fill="none" stroke="#000" strokeWidth="1">
    <defs>
      <pattern id="brick" width="13" height="12" patternUnits="userSpaceOnUse" x="796" y="642">
        <path d="M0 .5h13M0 6.500h13M3.500 0v6M9.500 6v6" stroke="#000" />
      </pattern>
    </defs>

    {/* title block frame */}
    <path d="M13 850.500h155" stroke="#0f0" />
    <path d="M13 889.500h157M168.500 560v330" stroke="#0f0" strokeWidth="3" />
    <path d="M13 915.500h181.500V560" />
    <text x="44" y="874" style={{ fontSize: 10, fill: '#2e7d32', stroke: 'none' }}>武汉理工大学</text>

    {/* ucs icon */}
    <path d="M28.500 953.500h9v9h-9zM32.500 958V908M33 958.500h50M34 891l6.500 7 6.500-7M40.500 898v7M87 944l13 13M100 944l-13 13" />

    {/* wall body */}
    <path d="M1077.500 340.500H1290M1077.500 340.500L1027 703.500M1167.500 340.500L1104 795.500" />
    <path d="M873 642.500h162M926 703.500h192M993.500 703.500l-6 46h123" />
    <path d="M987 750l117 45.500M987 750l-19 51M1104 795.500l-19 49M969.500 795.500l117 44" />
    <path d="M1290.500 340.500h63v25h-63zM796.500 642.500h77v29h-77z" fill="url(#brick)" />

    {/* dimensions */}
    <path d="M1077.500 315v24M1167.500 315v24M1077.500 320.500h90M1219.500 340.500V705M1214 705.500h9" />
    <path d="M931.500 642.500v107M926 749.500h7M993.500 658v10M1026.500 658v10M993.500 663.500h33" />
    <path d="M993.500 704v24M1117.500 704v24M993.500 723.500h124M1136.500 749.500v46M1131 749.500h6M1131 795.500h6" />
    <Arrow x={1078} y={320.5} r={0} />
    <Arrow x={1167} y={320.5} r={180} />
    <Arrow x={1219.5} y={341} r={90} />
    <Arrow x={1219.5} y={704} r={-90} />
    <Arrow x={931.5} y={643} r={90} />
    <Arrow x={931.5} y={703} r={-90} />
    <Arrow x={931.5} y={704} r={90} />
    <Arrow x={931.5} y={749} r={-90} />
    <Arrow x={994} y={663.5} r={0} />
    <Arrow x={1026} y={663.5} r={180} />
    <Arrow x={994} y={723.5} r={0} />
    <Arrow x={1117} y={723.5} r={180} />
    <Arrow x={1136.5} y={750} r={90} />
    <Arrow x={1136.5} y={795} r={-90} />
    <Arrow x={970} y={796} r={21} />
    <Arrow x={1086} y={839} r={201} />

    <Label x={1107} y={318}>1.35m</Label>
    <Label x={1041} y={544} r={-81}>1：0.25</Label>
    <Label x={1131} y={558} r={-82}>1：0.15</Label>
    <Label x={1217} y={538} r={-90}>8.0m</Label>
    <Label x={994} y={656}>0.55m</Label>
    <Label x={928} y={688} r={-90}>1.8m</Label>
    <Label x={928} y={742} r={-90}>0.8m</Label>
    <Label x={1039} y={721}>2.7m</Label>
    <Label x={1135} y={792} r={-90}>0.54m</Label>
    <Label x={1004} y={773} r={21}>0.2：1</Label>
    <Label x={1011} y={811} r={21}>2.75m</Label>

    {/* cursor */}
    <path d="M1742 811.500h97M1790.500 763v97M1787.500 808.500h6v6h-6z" />
  </Drawing>
);

const StatusIcon = ({ children }) => <Svg s={18}>{children}</Svg>;

const statusToggles = [
  ['推断约束', false, <><path d="M8 0v14M1 7h14M5 4h6v6H5z" /><path d="M16 10h3v4h-3z" stroke={blue} /><path d="M12 15h3v4h-3z" stroke={orange} /></>],
  ['捕捉', false, <><path d="M2 4h12M2 8h12M2 12h12M2 16h12" strokeDasharray="1 3" /><path d="M17 3v10M2 18h12" stroke="#111" strokeDasharray="3 1" /></>],
  ['栅格', false, <path d="M1 1h18v18H1zM5.500 1v18M10 1v18M14.500 1v18M1 5.500h18M1 10h18M1 14.500h18" fill="#fff" stroke="#333" />],
  ['正交', false, <><path d="M1 0v18h19" stroke="#333" strokeWidth="1.800" /><path d="M1 11h6v7" stroke="#777" /></>],
  ['极轴', true, <><circle cx="8" cy="11" r="6" stroke="#777" strokeWidth="2" /><path d="M7 11h12M7 11l9-8M14 5v8" stroke="#111" /></>],
  ['对象捕捉', true, <><path d="M5 5h14v14H5z" fill="#eef" stroke="#445" /><circle cx="3" cy="3" r="2.500" fill="#fff" stroke="#e05a20" strokeWidth="1.800" /></>],
  ['三维捕捉', false, <><path d="M4 6l5-5h9v11l-4 4H4zM4 6h10v10M14 6l4-5" fill="#e4e6f0" stroke="#667" strokeWidth="1.200" /><circle cx="4" cy="17" r="2.500" fill="#fff" stroke="#e05a20" strokeWidth="1.800" /></>],
  ['对象追踪', true, <path d="M14 5L4 15h13" stroke="#111" strokeWidth="1.600" />],
  ['动态坐标', true, <><path d="M2 1v16h17M2 17L12 6" /><path d="M17 1l-6 6h3l-3 5 7-7h-3z" fill="#ffb52e" stroke={orange} strokeWidth="1" /></>],
  ['动态输入', true, <path d="M1 9h10M7 3v12M11 12h8v4h-8z" stroke="#111" strokeWidth="1.600" />],
  ['线宽', false, <><path d="M0 10h20" stroke="#111" strokeWidth="1.200" /><path d="M10 10h9M11 2v15" stroke="#111" strokeWidth="2.600" /></>],
  ['透明度', true, <><path d="M1 1h18v18H1z" fill="#7db8e8" stroke={blue} strokeWidth="2" /><path d="M3 5h14M3 11h14" stroke="#cfe4f6" strokeWidth="3" strokeDasharray="3 3" /><path d="M6 8h12M6 14h12" stroke="#cfe4f6" strokeWidth="3" strokeDasharray="3 3" /></>],
  ['快捷特性', false, <><path d="M5 3h10v14H5z" fill="#fff" stroke="#111" /><path d="M7 7h6M7 10h6M7 13h6" stroke="#111" strokeDasharray="2 1" /></>],
  ['选择循环', false, <><path d="M0 5h11M5 0v11" /><path d="M7 7h8v8H7z" fill="#fff" /><path d="M10 11h9v8h-9z" fill="#8cc76d" stroke="#3f8a2c" /></>],
  ['注释监视器', false, <path d="M7 1h6v6h6v6h-6v6H7v-6H1V7h6z" fill="#f4f6fb" stroke="#555" />],
];

const AnnoPerson = ({ fill = '#eee' }) => (
  <path d="M9 1l3 8 6 6-2 2-7-5-7 5-2-2 6-6z" fill={fill} stroke="#555" strokeWidth="1" />
);

const Status = () => (
  <StatusBar>
    <Coords>2845.4393, 1110.7415, 0.0000</Coords>
    {statusToggles.map(([name, on, art]) => (
      <StatusButton key={name} aria-label={name} $on={on}><StatusIcon>{art}</StatusIcon></StatusButton>
    ))}
    <StatusGap $grow />
    <StatusButton $w={36}>模型</StatusButton>
    <StatusButton aria-label="布局"><StatusIcon><path d="M3 2h14v13H3zM0 18h20M7 6v6h6z" fill="#fff" /></StatusIcon></StatusButton>
    <StatusButton aria-label="快速查看"><StatusIcon><path d="M1 3h8v8H1zM11 3h8v8h-8z" fill="#fff" /><path d="M1 15h18" strokeWidth="3" /></StatusIcon></StatusButton>
    <StatusGap $w={22} />
    <StatusButton $w={60} $mono><StatusIcon><AnnoPerson /></StatusIcon>1:1<Caret /></StatusButton>
    <StatusButton aria-label="注释可见性"><StatusIcon><AnnoPerson /><circle cx="16" cy="9" r="3" fill="#ffd98a" stroke={orange} /></StatusIcon></StatusButton>
    <StatusButton aria-label="自动缩放"><StatusIcon><AnnoPerson fill="#bbb" /><path d="M2 1l14 14" stroke="#888" /></StatusIcon></StatusButton>
    <StatusGap $w={6} />
    <StatusButton aria-label="切换工作空间">
      <StatusIcon>
        <circle cx="10" cy="10" r="7.500" stroke="#444" strokeWidth="4" strokeDasharray="3 2.890" />
        <circle cx="10" cy="10" r="7.500" stroke="#eee" strokeWidth="2" strokeDasharray="2 3.890" />
        <circle cx="10" cy="10" r="6" fill="#eee" stroke="#444" /><circle cx="10" cy="10" r="2.500" fill="#999" />
      </StatusIcon>
    </StatusButton>
    <StatusButton aria-label="锁定"><UnlockIcon s={17} fill="#eee" metal="#444" /></StatusButton>
    <StatusButton aria-label="硬件加速" $w={24}>
      <StatusIcon><path d="M1 4h16v7H1z" fill="#99a" stroke="#556" /><path d="M2 2h14M2 13h10" stroke="#556" strokeDasharray="2 2" strokeWidth="3" /><circle cx="15" cy="13" r="3.500" fill="#ffe0a0" stroke={orange} /></StatusIcon>
    </StatusButton>
    <StatusGap $w={2} />
    <TrayGroup>
      <StatusIcon><path d="M1 1l8 8" stroke="#667" strokeDasharray="2 2" strokeWidth="4" /><path d="M10 8h8v11h-8z" fill="#dcecff" stroke={blue} /><path d="M12 12h4M12 15h4" stroke={blue} /></StatusIcon>
      <StatusIcon><path d="M3 1h10l3 3v7H3z" fill="#4a90d0" stroke="#246" /><path d="M1 8h14v8H1z" fill="#f5d23a" stroke="#a80" /><path d="M9 14l4 4 6-8" stroke="#2fa32f" strokeWidth="2.500" /></StatusIcon>
      <BulbIcon s={18} />
    </TrayGroup>
    <StatusButton aria-label="托盘菜单" $w={12}><Caret s={6} /></StatusButton>
    <StatusButton aria-label="全屏显示"><StatusIcon><path d="M2 2h16v16H2z" fill="#eef" /><path d="M2 3.500h16" strokeWidth="3" /></StatusIcon></StatusButton>
    <StatusGap $w={20}>
      <Svg s={20}><path d="M8 17h12M12 13h8M16 9h4" stroke="#ddd" strokeWidth="2.500" strokeDasharray="2.500 1.500" /></Svg>
    </StatusGap>
  </StatusBar>
);

const CubeAndNav = () => (
  <>
    <DocButtons>
      <button aria-label="最小化文档"><Svg s={13} box="0 0 13 13"><path d="M1 6.500h11v4H1z" /></Svg></button>
      <button aria-label="还原文档"><Svg s={13} box="0 0 13 13"><path d="M4 3V1h8v8h-2M1 4h8v8H1z" /><path d="M4 7h2v2H4z" /></Svg></button>
      <button aria-label="关闭文档">
        <Svg s={13} box="0 0 13 13"><path d="M2 1.500l9 10M11 1.500l-9 10" stroke="#444" strokeWidth="4.500" /><path d="M2 1.500l9 10M11 1.500l-9 10" stroke="#fff" strokeWidth="1.600" /></Svg>
      </button>
    </DocButtons>
    <ViewCube width="140" height="140" viewBox="0 0 140 140" fill="none">
      <circle cx="70" cy="70" r="54" stroke="#fcfcfc" strokeWidth="13" />
      <circle cx="70" cy="70" r="60" stroke="#f8f8f8" />
      <circle cx="70" cy="70" r="47" stroke="#f8f8f8" />
      <rect x="44.5" y="44.5" width="51" height="51" fill="#ededed" stroke="#999" />
      <rect x="54" y="54" width="32" height="32" fill="#e2e4ea" />
      <path d="M55 79.500h29M70 66.500h10" stroke="#ccc" />
      <path d="M69 59v20" stroke="#888" strokeWidth="2" />
      <path d="M78 66h5l-2-2zM81 79h4l-2-2z" fill="#777" />
      <text x="70" y="22">北</text>
      <text x="70" y="135">南</text>
      <text x="14" y="79">西</text>
      <text x="126" y="79">东</text>
    </ViewCube>
    <WcsButton>WCS<Svg w={9} h={5} box="0 0 9 5"><path d="M1 .5h7L4.500 4z" stroke="#aab" strokeWidth="1" /></Svg></WcsButton>
    <NavBar>
      <svg width="32" height="211" viewBox="0 0 32 211" fill="none" stroke="#dddfe1" strokeWidth="1.200" aria-hidden="true">
        <circle cx="26" cy="5" r="4" /><path d="M24 3l4 4M28 3l-4 4" />
        <path d="M27 19v10a11 11 0 1 1-11-11h11z" /><circle cx="16" cy="29" r="6" /><path d="M12 34l-4 4M20 34l4 4" />
        <path d="M3 56.500h26M3 164.500h26" stroke="#ccc" />
        <path d="M10 82c-2-4-4-6-6-8 0-2 2-2 3-1l3 2-2-9c0-2 2-2 3 0l2 6V63c0-2 3-2 3 0v9l2-8c1-2 3-1 3 0l-1 9 3-5c1-1 3 0 2 2l-4 12c-1 2-9 2-11 0z" />
        <path d="M5 92l14 14M19 90L5 104M4 95v-5h5M15 90h5v5M4 101v4h5" /><circle cx="20" cy="105" r="5" fill="#f6f6f6" /><path d="M24 109l4 4" strokeWidth="3" />
        <path d="M14 148v-15h-3l5-5 5 5h-3v15z" /><path d="M12 137c-11 1-10 7 0 7h5c11 0 13-6 3-7M8 140l-3 3 4 3" />
        <path d="M5 170h5v6H5zM13 170h5v6h-5zM21 170h5v6h-5zM5 179h15v13H5z" /><path d="M10 182v7l5-3.500z" fill="#d0d2d4" />
        <path d="M13 49h6l-3 3zM13 119h6l-3 3zM13 157h6l-3 3z" fill="#c8cacc" stroke="none" />
        <circle cx="26" cy="205" r="4" /><path d="M24 204h4M24 206h4" />
      </svg>
    </NavBar>
  </>
);

const Desk = () => (
  <Taskbar>
    <TaskButton $w={60} aria-label="开始">
      <Svg><path d="M0 3l8.500-1.200v7.700H0zM9.500 1.600L20 0v9.500H9.500zM0 10.500h8.500v7.700L0 17zM9.500 10.500H20V20L9.500 18.400z" fill="#fff" stroke="none" /></Svg>
    </TaskButton>
    <TaskButton $w={60} aria-label="搜索"><Svg><circle cx="10" cy="10" r="8.500" stroke="#fff" strokeWidth="2.400" /></Svg></TaskButton>
    <TaskButton $w={60} aria-label="任务视图">
      <Svg><path d="M1 0v4h12V0M1 20v-4h12v4M1 6.500h12v7H1zM18 0v4M18 7v4M18 13v7" stroke="#fff" /></Svg>
    </TaskButton>
    <TaskButton $w={68} aria-label="浏览器">
      <Svg s={28} box="0 0 28 28">
        {[0, 72, 144, 216, 288].map(a => (
          <path key={a} d="M14 14C8 14 4 10 5 5C8 0 15-1 19 3C15 5 12 9 14 14z" fill="#e8e8ea" stroke="#0b131e" strokeWidth="1" transform={`rotate(${a} 14 14)`} />
        ))}
      </Svg>
    </TaskButton>
    <TaskButton aria-label="Edge">
      <Svg s={26} box="0 0 26 26"><path d="M1 11C3 4 8 0 14 0c7 0 11 5 11 11v3H9c0 5 4 7 8 7 3 0 5-1 7-2v5c-3 1-5 2-9 2C8 26 4 22 4 16c0-4 2-7 6-9-3 0-6 1-9 4zm8-1h9c0-3-2-4-4-4s-5 1-5 4z" fill="#0a7ad8" stroke="none" /></Svg>
    </TaskButton>
    <TaskButton aria-label="文件资源管理器" $running>
      <Svg s={28} box="0 0 28 28"><path d="M0 2h11l2 3h15v21H0z" fill="#ffe394" stroke="none" /><path d="M0 2h11v4H0z" fill="#f6c22d" stroke="none" /><path d="M5 14h18v12h-4v-6h-10v6H5z" fill="#3cb0e4" stroke="none" /></Svg>
    </TaskButton>
    <TaskButton aria-label="应用商店">
      <Svg w={30} h={32} box="0 0 30 32">
        <path d="M9 9V6a5 5 0 0 1 11 0v3" stroke="#ddd" strokeWidth="1.800" /><path d="M0 9h30v22H0z" fill="#fff" stroke="none" />
        <path d="M9 13h5v6H9z" fill="#e8501f" stroke="none" /><path d="M16 13h5v6h-5z" fill="#79b71d" stroke="none" />
        <path d="M9 21h5v6H9z" fill="#16a0e6" stroke="none" /><path d="M16 21h5v6h-5z" fill="#fdb813" stroke="none" />
      </Svg>
    </TaskButton>
    <TaskButton aria-label="邮件">
      <Svg w={30} h={24} box="0 0 30 24"><path d="M15 0l15 8v16H0V8z" fill="#fff" stroke="none" /><path d="M3 9h23l-9 5 5 5z" fill="#0b131e" stroke="none" /></Svg>
    </TaskButton>
    <TaskButton aria-label="WPS" $running>
      <Svg w={27} h={30} box="0 0 27 30"><path d="M13.500 0L27 7v16l-13.500 7L0 23V7z" fill="#2f73e8" stroke="none" /><path d="M5 10l4 10 4.500-9 4.500 9 4-10M9 10h9" stroke="#fff" strokeWidth="1.600" /></Svg>
    </TaskButton>
    <TaskButton aria-label="AutoCAD" $running>
      <Svg s={28} box="0 0 28 28">
        <path d="M0 6h28v15H0z" fill="#26201f" stroke="none" /><path d="M0 21h28v7H0z" fill="#d20d0d" stroke="none" /><path d="M0 21h14L4 28H0z" fill="#6a0808" stroke="none" />
        <path d="M6 0h5l5 17-3 3-3-5-3 1-1 3-4-1zM8 5v7h3z" fill="#d6d6d6" fillRule="evenodd" stroke="none" />
        <path d="M17 18V9l5-3v11M22 12l-4 2M25 5v12" stroke="#777" strokeWidth="2" />
      </Svg>
    </TaskButton>
    <Tray>
      <TrayButton $w={58} aria-label="人脉">
        <Svg><circle cx="13.500" cy="5" r="3.500" stroke="#fff" /><path d="M9 12c1-4 9-4 10 2" stroke="#fff" /><circle cx="6" cy="11" r="3" stroke="#fff" /><path d="M1 19c0-6 9-6 10 0" stroke="#fff" /></Svg>
      </TrayButton>
      <TrayButton aria-label="显示隐藏的图标"><Svg w={16} h={9} box="0 0 16 9"><path d="M1 8l7-7 7 7" stroke="#fff" /></Svg></TrayButton>
      <TrayButton aria-label="安全卫士"><Svg><circle cx="10" cy="10" r="10" fill="#f4d117" stroke="none" /><path d="M10 0a10 10 0 0 0-8 16C3 9 8 5 17 4a10 10 0 0 0-7-4z" fill="#a5d628" stroke="none" /><path d="M10 5v10M5 10h10" stroke="#1d5c1d" strokeWidth="3.500" /></Svg></TrayButton>
      <TrayButton aria-label="网络"><Svg><path d="M5 3h14v11H1V9M12 14v4M8 18h8M0 2h4v4H0zM2 6v3" stroke="#fff" /></Svg></TrayButton>
      <TrayButton aria-label="音量"><Svg><path d="M1 7h3l4-4v14l-4-4H1zM11 8c1 1 1 3 0 4M13.500 5.500c3 3 3 6 0 9M16 3c5 5 5 9 0 14" stroke="#fff" strokeWidth="1.200" /></Svg></TrayButton>
      <TrayButton>中</TrayButton>
      <Clock>{'15:24\n2019/5/26'}</Clock>
      <Notice aria-label="通知"><Svg s={22} box="0 0 22 22"><path d="M0 1h22v16H12l-5 5v-5H0z" fill="#fff" stroke="none" /><path d="M4 5.500h14M4 9h14M4 12.500h9" stroke="#222" /></Svg><span>1</span></Notice>
    </Tray>
  </Taskbar>
);

const App = () => (
  <Desktop>
    <GlobalStyle />
    <BackTop><i /><i /><i /></BackTop>
    <Middle>
      <Edge />
      <Window>
        <TitleBar>
          <h1>{'AutoCAD 2013      K1200左挡墙.dwg'}</h1>
          <CaptionButton aria-label="最小化"><Svg s={14} box="0 0 14 14"><path d="M0 6.500h14" stroke="#999" strokeWidth="1" /></Svg></CaptionButton>
          <CaptionButton aria-label="最大化"><Svg s={14} box="0 0 14 14"><path d="M1.500 1.500h11v11h-11z" stroke="#999" strokeWidth="1" /></Svg></CaptionButton>
          <CaptionButton aria-label="关闭"><Svg s={14} box="0 0 14 14"><path d="M1 1l12 12M13 1L1 13" stroke="#999" strokeWidth="1" /></Svg></CaptionButton>
        </TitleBar>
        <MenuBar>
          {menuTabs.map((tab, i) => <MenuTab key={tab} $active={i === 0}>{tab}</MenuTab>)}
          <MinimizeTab aria-label="最小化功能区"><span><Caret s={6} up /></span><Caret s={6} color="#fff" /></MinimizeTab>
        </MenuBar>
        <RibbonPanels />
        <Divider />
        <Canvas>
          <WallDrawing />
          <CubeAndNav />
          <CommandLine>
            <CommandGrip>
              <Grip $color="#ddd" />
              <Svg s={11} box="0 0 11 11"><path d="M1 1l9 9M10 1l-9 9" stroke="#fff" strokeWidth="2.400" /></Svg>
              <Svg s={20}><path d="M2 2l4 1 2 3-2 2-4-2c-1 4 2 6 5 5l8 8 3 1-1-4-7-7c1-4-3-8-8-7z" fill="#eee" stroke="#bbb" strokeWidth=".5" /></Svg>
            </CommandGrip>
            <CommandButton aria-label="最近的命令">
              <Svg><path d="M1 0h18v20H1z" fill="#e4e7ec" stroke="#d0d3d8" /><path d="M4 5l5 5-5 5M11 15h6" stroke="#8a9098" strokeWidth="2" /></Svg>
              <Caret color="#999" />
            </CommandButton>
            <input aria-label="命令" placeholder="键入命令" />
            <CommandButton aria-label="历史记录"><Caret s={10} up color="#666" /></CommandButton>
          </CommandLine>
        </Canvas>
        <LayoutTabs>
          <TabArrow aria-label="第一个"><Svg s={12} box="0 0 12 12"><path d="M2 0v12" stroke="#666" /><path d="M10 0v12L3 6z" fill="#666" stroke="none" /></Svg></TabArrow>
          <TabArrow aria-label="上一个"><Svg s={12} box="0 0 12 12"><path d="M9 0v12L2 6z" fill="#666" stroke="none" /></Svg></TabArrow>
          <TabArrow aria-label="下一个"><Svg s={12} box="0 0 12 12"><path d="M3 0v12l7-6z" fill="#666" stroke="none" /></Svg></TabArrow>
          <TabArrow aria-label="最后一个"><Svg s={12} box="0 0 12 12"><path d="M10 0v12" stroke="#666" /><path d="M2 0v12l7-6z" fill="#666" stroke="none" /></Svg></TabArrow>
          <LayoutTab $active>模型</LayoutTab>
          <LayoutTab>布局1</LayoutTab>
          <LayoutTab>布局2</LayoutTab>
        </LayoutTabs>
        <Status />
      </Window>
      <Edge $right />
    </Middle>
    <BackBottom />
    <Desk />

    <AppButton aria-label="应用程序菜单">
      <Svg w={25} h={36} box="0 0 25 36">
        <path d="M1 31L7 3l2-2h6l9 26-6 5-3-7-6 1-2 6-5 2z" fill="#d4141d" stroke="#8a0f14" strokeWidth="1" />
        <path d="M7 3l2-2h6l4 13-8-2-5 4z" fill="#f28a86" stroke="none" />
        <path d="M10 20l2-9 3 8z" fill="#8a8a8a" stroke="none" />
        <path d="M1 31l5-2 4-9-1 6-2 6-5 2zM18 32l-3-7 9 2z" fill="#8f0d13" stroke="none" />
      </Svg>
      <Caret />
    </AppButton>
    <PropertiesPalette />
    <SpeedBall>43</SpeedBall>
    <Balloon role="status">
      <BalloonHead>
        <Svg s={15}><circle cx="10" cy="10" r="9.500" fill="#1f4fc0" stroke="#8aa" strokeWidth="1" /><path d="M10 4v2.500M10 8.500V16" stroke="#fff" strokeWidth="2.500" /></Svg>
        <strong>完成打印和发布作业</strong>
        <button aria-label="关闭"><Svg s={14} box="0 0 14 14"><path d="M3 3l8 8M11 3l-8 8" stroke="#000" strokeWidth="2.200" /></Svg></button>
      </BalloonHead>
      <p>未发现错误或警告</p>
      <p><a href="#details">单击以查看打印和</a></p>
      <BalloonTail width="20" height="18" viewBox="0 0 20 18">
        <path d="M0 0h19v17z" fill="#ffffe1" />
        <path d="M0 1l19 16.500V1" fill="none" stroke="#000" />
      </BalloonTail>
    </Balloon>
    <ImeBar>
      <Grip />
      <button>M</button>
      <button>中</button>
      <button aria-label="半角"><Svg s={18}><path d="M8 1c2 3 8 4 9 9s-6 9-13 8" stroke="#111" strokeWidth="2.600" /><path d="M8 1v12" stroke="#111" strokeWidth="2" /><circle cx="5" cy="14" r="3.500" fill="#111" stroke="none" /></Svg></button>
      <button aria-label="标点"><Svg s={18}><path d="M2 2h4v4H2z" stroke="#111" strokeWidth="2" /><circle cx="14" cy="10" r="3" fill="#111" stroke="none" /><path d="M16 10c0 4-1 6-4 8" stroke="#111" strokeWidth="2.500" /></Svg></button>
      <button>简</button>
      <button aria-label="设置"><Svg><circle cx="10" cy="10" r="7.500" stroke="#111" strokeWidth="4" strokeDasharray="3.500 2.390" /><circle cx="10" cy="10" r="5.500" stroke="#111" strokeWidth="2" /><circle cx="10" cy="10" r="1.800" fill="#111" /></Svg></button>
      <button aria-label="更多"><Svg><path d="M10 3h5v3h-5z" fill="#111" stroke="none" /><path d="M8 13h9l-4.500 4z" fill="#111" stroke="none" /></Svg></button>
    </ImeBar>
  </Desktop>
);

export default App;
